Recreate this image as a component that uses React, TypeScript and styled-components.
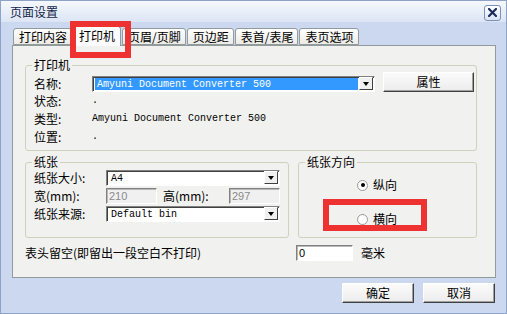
import styled, { createGlobalStyle } from 'styled-components'

const GlobalStyle = createGlobalStyle`
  body {
    margin: 0;
    font-family: "Noto Sans CJK SC", "Liberation Sans", sans-serif;
    font-size: 12px;
    color: #000;
  }
  * { box-sizing: border-box; }
`;

const Window = styled.div`
  position: relative;
  width: 507px;
  height: 314px;
  background: #cbd8ef;
  border: 1px solid #8fa2c8;
  display: flex;
  flex-direction: column;
`;

const TitleBar = styled.div`
  height: 21px;
  padding: 0 5px 0 9px;
  display: flex;
  align-items: center;
  justify-content: space-between;
  background: linear-gradient(#f5f8fd, #dce5f5);
  color: #15264a;
  line-height: 14px;
`;

const CloseButton = styled.div`
  width: 17px;
  height: 16px;
  margin-top: 2px;
  border: 1px solid #7d90b6;
  border-radius: 3px;
  background: linear-gradient(#ffffff, #dbe4f4);
  display: flex;
  align-items: center;
  justify-content: center;
`;

const Content = styled.div`
  padding: 5px 10px 0 11px;
  display: flex;
  flex-direction: column;
`;

const TabStrip = styled.div`
  height: 18px;
  display: flex;
  align-items: flex-end;
  padding-left: 1px;
`;

const Tab = styled.div<{ $active?: boolean }>`
  position: relative;
  height: ${p => (p.$active ? '20px' : '17px')};
  margin-bottom: ${p => (p.$active ? '-1px' : '0')};
  margin-right: 1px;
  padding: ${p => (p.$active ? '2px 5px 0' : '1px 4px 0 5px')};
  border: 1px solid #919b9c;
  border-bottom: ${p => (p.$active ? 'none' : '1px solid #919b9c')};
  border-radius: 3px 3px 0 0;
  background: ${p => (p.$active ? '#fcfcfe' : 'linear-gradient(#ffffff, #ecebe6)')};
  line-height: 14px;
  white-space: nowrap;
  z-index: ${p => (p.$active ? 2 : 1)};
`;

const Panel = styled.div`
  height: 233px;
  border: 1px solid #919b9c;
  background: #f1f1ef;
  padding: 12px 18px 0 12px;
  display: flex;
  flex-direction: column;
`;

const Group = styled.fieldset`
  margin: 0;
  padding: 0 8px 5px 8px;
  border: 1px solid #d0d0bf;
  border-radius: 3px;
  min-width: 0;
`;

const Legend = styled.legend`
  margin-left: -2px;
  padding: 0 2px;
  line-height: 14px;
`;

const Row = styled.div<{ $h: number }>`
  height: ${p => p.$h}px;
  display: flex;
  align-items: center;
`;

const NameRow = styled.div`
  height: 20px;
  display: flex;
  align-items: flex-end;
  gap: 8px;
  margin-right: -6px;
`;

const Label = styled.div<{ $w: number; $indent?: number }>`
  width: ${p => p.$w}px;
  padding-left: ${p => p.$indent ?? 0}px;
  flex-shrink: 0;
  line-height: 16px;
  white-space: nowrap;
`;

const NameLabel = styled(Label)`
  margin-right: -8px;
`;

const Mono = styled.div`
  font-family: "Liberation Mono", monospace;
  font-size: 10px;
  line-height: 16px;
  white-space: pre;
`;

const SelectBox = styled.div<{ $w: number }>`
  width: ${p => p.$w}px;
  height: 16px;
  display: flex;
  background: #fff;
  border-style: solid;
  border-width: 1px;
  border-color: #808080 #ffffff #ffffff #808080;
  box-shadow: inset 1px 1px 0 #404040;
  padding: 1px 1px 1px 2px;
`;

const SelectText = styled.div<{ $hl?: boolean }>`
  flex: 1;
  padding-left: 2px;
  margin-right: 1px;
  font-family: "Liberation Mono", monospace;
  font-size: 10px;
  line-height: 13px;
  white-space: pre;
  background: ${p => (p.$hl ? '#3399ff' : 'transparent')};
  color: ${p => (p.$hl ? '#fff' : '#000')};
`;

const DropBtn = styled.div`
  width: 14px;
  height: 13px;
  margin-top: -1px;
  background: #f0f0f0;
  border-style: solid;
  border-width: 1px;
  border-color: #ffffff #404040 #404040 #ffffff;
  display: flex;
  align-items: center;
  justify-content: center;
  &::after {
    content: '';
    border-left: 3.5px solid transparent;
    border-right: 3.5px solid transparent;
    border-top: 4px solid #000;
  }
`;

const Button = styled.div<{ $w: number }>`
  width: ${p => p.$w}px;
  height: 20px;
  display: flex;
  align-items: center;
  justify-content: center;
  background: linear-gradient(#fbfbfb, #ececec);
  border-style: solid;
  border-width: 1px;
  border-color: #ffffff #404040 #404040 #ffffff;
  box-shadow: inset -1px -1px 0 #a0a0a0;
  line-height: 14px;
`;

const TextInput = styled.div<{ $w: number; $disabled?: boolean }>`
  width: ${p => p.$w}px;
  height: 16px;
  padding-left: 2px;
  background: ${p => (p.$disabled ? '#f0f0f0' : '#fff')};
  color: ${p => (p.$disabled ? '#8a8a8a' : '#000')};
  border-style: solid;
  border-width: 1px;
  border-color: #808080 #ffffff #ffffff #808080;
  box-shadow: inset 1px 1px 0 #b8b8b8;
  font-family: "Liberation Sans", sans-serif;
  font-size: 11px;
  line-height: 14px;
`;

const Split = styled.div`
  margin-top: 4px;
  display: grid;
  grid-template-columns: 264px 1fr;
  gap: 9px;
`;

const RadioList = styled.div`
  padding: 9px 0 6px 50px;
  display: flex;
  flex-direction: column;
  gap: 20px;
`;

const RadioItem = styled.div`
  display: flex;
  align-items: center;
  gap: 5px;
  line-height: 14px;
`;

const RadioDot = styled.div<{ $checked?: boolean }>`
  width: 11px;
  height: 11px;
  border-radius: 50%;
  border: 1px solid #9a9a9a;
  background: #fff;
  display: flex;
  align-items: center;
  justify-content: center;
  &::after {
    content: '';
    width: 4px;
    height: 4px;
    border-radius: 50%;
    background: ${p => (p.$checked ? '#000' : 'transparent')};
  }
`;

const MarginRow = styled.div`
  margin-top: 6px;
  height: 17px;
  display: flex;
  align-items: center;
  gap: 8px;
`;

const Footer = styled.div`
  margin-top: 5px;
  padding-right: 1px;
  display: flex;
  justify-content: flex-end;
  gap: 9px;
`;

const Mark = styled.div<{ $x: number; $y: number; $w: number; $h: number }>`
  position: absolute;
  left: ${p => p.$x}px;
  top: ${p => p.$y}px;
  width: ${p => p.$w}px;
  height: ${p => p.$h}px;
  border: 6px solid #ee3232;
  z-index: 5;
`;

const tabs = ['打印内容', '打印机', '页眉/页脚', '页边距', '表首/表尾', '表页选项'];

export default function App(): JSX.Element {
  return (
    <>
      <GlobalStyle />
      <Window>
        <TitleBar>
          <span>页面设置</span>
          <CloseButton>
            <svg width="9" height="9" viewBox="0 0 9 9">
              <path d="M1 1 L8 8 M8 1 L1 8" stroke="#1b2c5c" strokeWidth="2.2" strokeLinecap="square" />
            </svg>
          </CloseButton>
        </TitleBar>

        <Content>
          <TabStrip>
            {tabs.map((t, i) => (
              <Tab key={t} $active={i === 1}>{t}</Tab>
            ))}
          </TabStrip>

          <Panel>
            <Group>
              <Legend>打印机</Legend>
              <NameRow>
                <NameLabel $w={58}>名称:</NameLabel>
                <SelectBox $w={283}>
                  <SelectText $hl>Amyuni Document Converter 500</SelectText>
                  <DropBtn />
                </SelectBox>
                <Button $w={91}>属性</Button>
              </NameRow>
              <Row $h={18}>
                <Label $w={58}>状态:</Label>
                <Mono>.</Mono>
              </Row>
              <Row $h={18}>
                <Label $w={58}>类型:</Label>
                <Mono>Amyuni Document Converter 500</Mono>
              </Row>
              <Row $h={17}>
                <Label $w={58}>位置:</Label>
                <Mono>.</Mono>
              </Row>
            </Group>

            <Split>
              <Group>
                <Legend>纸张</Legend>
                <Row $h={18}>
                  <Label $w={72}>纸张大小:</Label>
                  <SelectBox $w={174}>
                    <SelectText>A4</SelectText>
                    <DropBtn />
                  </SelectBox>
                </Row>
                <Row $h={18}>
                  <Label $w={72}>宽(mm):</Label>
                  <TextInput $w={51} $disabled>210</TextInput>
                  <Label $w={72} $indent={6}>高(mm):</Label>
                  <TextInput $w={51} $disabled>297</TextInput>
                </Row>
                <Row $h={18}>
                  <Label $w={72}>纸张来源:</Label>
                  <SelectBox $w={174}>
                    <SelectText>Default bin</SelectText>
                    <DropBtn />
                  </SelectBox>
                </Row>
              </Group>

              <Group>
                <Legend>纸张方向</Legend>
                <RadioList>
                  <RadioItem><RadioDot $checked />纵向</RadioItem>
                  <RadioItem><RadioDot />横向</RadioItem>
                </RadioList>
              </Group>
            </Split>

            <MarginRow>
              <Label $w={263}>表头留空(即留出一段空白不打印)</Label>
              <TextInput $w={57}>0</TextInput>
              <span>毫米</span>
            </MarginRow>
          </Panel>

          <Footer>
            <Button $w={72}>确定</Button>
            <Button $w={72}>取消</Button>
          </Footer>
        </Content>

        <Mark $x={69} $y={20} $w={61} $h={37} />
        <Mark $x={322} $y={198} $w={104} $h={32} />
      </Window>
    </>
  )
}
